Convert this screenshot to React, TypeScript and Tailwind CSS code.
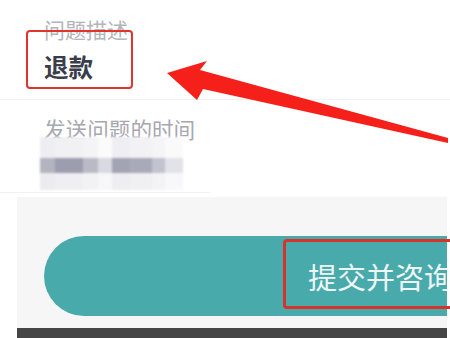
const blurBand = [
  { w: 15, top: '#eeeef2', mid: '#b3b4c0', bot: '#ececf0' },
  { w: 28, top: '#f1f1f4', mid: '#9c9eb0', bot: '#efeff3' },
  { w: 15, top: '#f4f4f6', mid: '#b9bac6', bot: '#f2f2f5' },
  { w: 14, top: '#fbfbfc', mid: '#d9d9e1', bot: '#f7f7f9' },
  { w: 18, top: '#efeff3', mid: '#a2a4b4', bot: '#eeeef2' },
  { w: 22, top: '#f2f2f5', mid: '#a9aab9', bot: '#f0f0f3' },
  { w: 13, top: '#f5f5f7', mid: '#c2c3ce', bot: '#f3f3f6' },
  { w: 18, top: '#fafafb', mid: '#e2e2e9', bot: '#f8f8fa' },
]

export default function App() {
  return (
    <div className="relative w-[450px] h-[338px] overflow-hidden bg-white font-['Noto_Sans_CJK_SC','Noto_Sans',sans-serif]">
      {/* form fields */}
      <div className="border-b border-[#f1f1f3] pt-[14px] pb-[17px] pl-[44px]">
        <div className="h-[30px] text-[21px] leading-[30px] text-[#b4b5bb]">问题描述</div>
        <div className="mt-[8px] h-[30px] text-[24.5px] font-bold leading-[30px] text-[#3a3d4a]">退款</div>
      </div>
      <div className="mr-[240px] border-b border-[#f1f1f3] pt-[14px] pl-[44px]">
        <div className="h-[30px] text-[21.6px] leading-[30px] text-[#a7a8ae]">发送问题的时间</div>
        {/* blurred time value */}
        <div className="mt-[-7px] ml-[-4px] flex blur-[1px]">
          {blurBand.map((b, i) => (
            <div key={i} className="flex flex-col" style={{ width: b.w }}>
              <div className="h-[21px]" style={{ background: b.top }} />
              <div className="h-[15px]" style={{ background: b.mid }} />
              <div className="h-[17px]" style={{ background: b.bot }} />
            </div>
          ))}
        </div>
        <div className="h-[2px]" />
      </div>

      {/* bottom bar */}
      <div className="mt-[4px] ml-[17px] mr-[3px] flex h-[131px] flex-col overflow-hidden bg-[#f6f6f7]">
        <div className="mt-[39px] ml-[27px] flex h-[80px] w-[440px] shrink-0 items-center rounded-l-full bg-[#49aaac] pl-[264px]">
          <span className="whitespace-nowrap text-[29px] leading-none text-[#eef6f6]">提交并咨询</span>
        </div>
      </div>
      <div className="ml-[17px] mr-[3px] h-[10px] bg-[#454545]" />

      {/* annotations */}
      <div className="absolute left-[26px] top-[30px] h-[59px] w-[107px] rounded-[4px] border-[2.5px] border-[#e0342c]" />
      <div className="absolute left-[283px] top-[239px] h-[70px] w-[200px] rounded-[4px] border-[3px] border-[#d8322a]" />
      <svg className="absolute left-0 top-0" width="450" height="338" viewBox="0 0 450 338">
        <polygon
          points="167,73 207,61 200,70 448,138 448,143 203,89 197,100"
          fill="#f5201a"
        />
      </svg>
    </div>
  )
}
